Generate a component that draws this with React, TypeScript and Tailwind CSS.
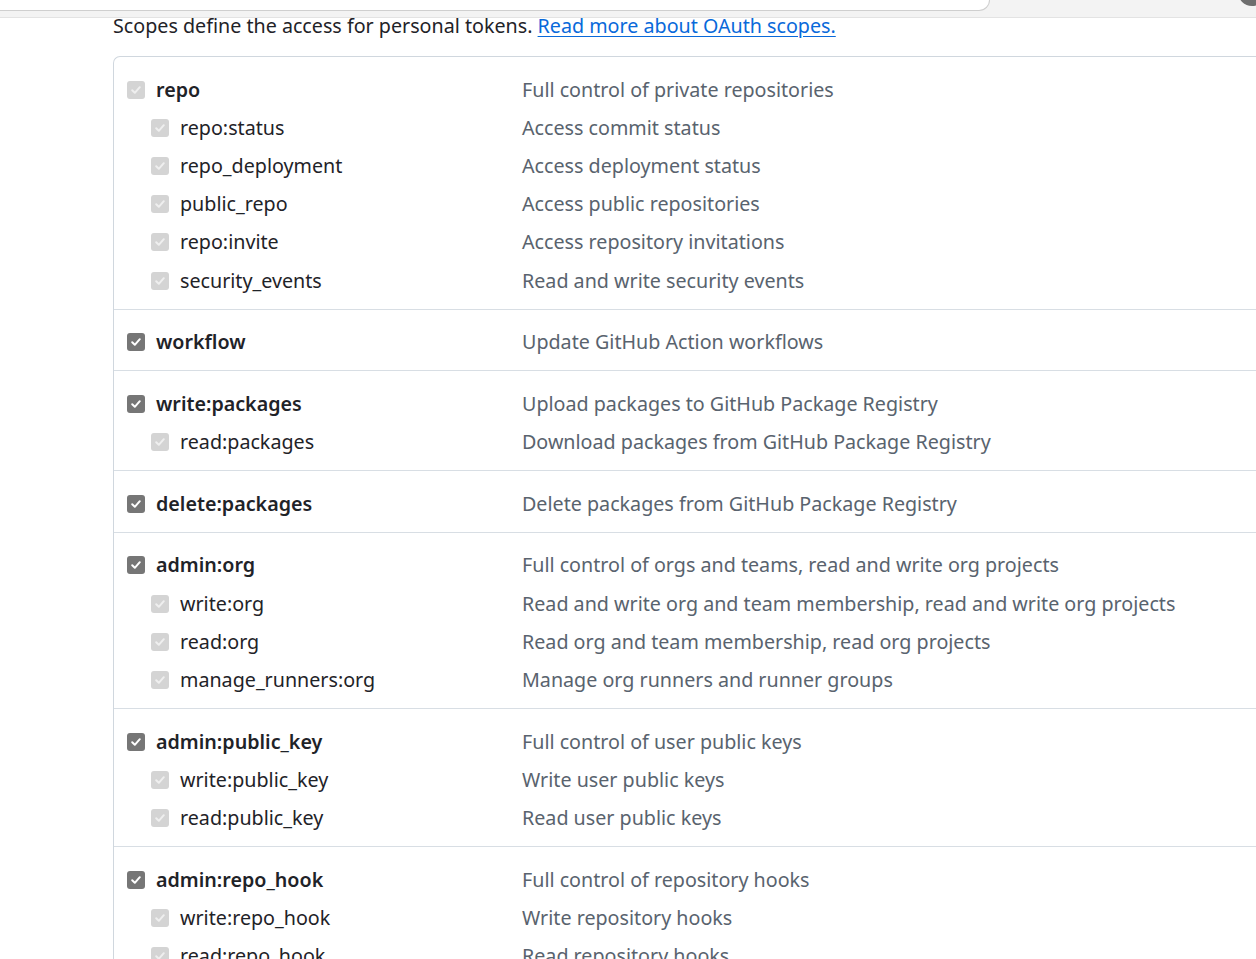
import React from "react";

type Scope = { name: string; desc: string; sub?: boolean; active?: boolean };

const groups: Scope[][] = [
  [
    { name: "repo", desc: "Full control of private repositories" },
    { name: "repo:status", desc: "Access commit status", sub: true },
    { name: "repo_deployment", desc: "Access deployment status", sub: true },
    { name: "public_repo", desc: "Access public repositories", sub: true },
    { name: "repo:invite", desc: "Access repository invitations", sub: true },
    { name: "security_events", desc: "Read and write security events", sub: true },
  ],
  [{ name: "workflow", desc: "Update GitHub Action workflows", active: true }],
  [
    { name: "write:packages", desc: "Upload packages to GitHub Package Registry", active: true },
    { name: "read:packages", desc: "Download packages from GitHub Package Registry", sub: true },
  ],
  [{ name: "delete:packages", desc: "Delete packages from GitHub Package Registry", active: true }],
  [
    { name: "admin:org", desc: "Full control of orgs and teams, read and write org projects", active: true },
    { name: "write:org", desc: "Read and write org and team membership, read and write org projects", sub: true },
    { name: "read:org", desc: "Read org and team membership, read org projects", sub: true },
    { name: "manage_runners:org", desc: "Manage org runners and runner groups", sub: true },
  ],
  [
    { name: "admin:public_key", desc: "Full control of user public keys", active: true },
    { name: "write:public_key", desc: "Write user public keys", sub: true },
    { name: "read:public_key", desc: "Read user public keys", sub: true },
  ],
  [
    { name: "admin:repo_hook", desc: "Full control of repository hooks", active: true },
    { name: "write:repo_hook", desc: "Write repository hooks", sub: true },
    { name: "read:repo_hook", desc: "Read repository hooks", sub: true },
  ],
  [{ name: "admin:org_hook", desc: "Full control of organization hooks", active: true }],
];

function Checkbox({ active }: { active?: boolean }) {
  return (
    <span
      className={
        "flex h-[18px] w-[18px] shrink-0 items-center justify-center rounded-[3px] " +
        (active ? "bg-[#767676]" : "bg-[#d4d4d4]")
      }
    >
      <svg width="12" height="12" viewBox="0 0 12 12" fill="none" aria-hidden="true">
        <path
          d="M2.2 6.3L4.8 8.8L9.8 3.2"
          stroke={active ? "#ffffff" : "#efefef"}
          strokeWidth="2"
          strokeLinecap="round"
          strokeLinejoin="round"
        />
      </svg>
    </span>
  );
}

function Row({ scope }: { scope: Scope }) {
  return (
    <div className="flex h-[38.2px] items-center">
      <div
        className={
          "flex w-[408px] shrink-0 items-center gap-[11px] " + (scope.sub ? "pl-[37px]" : "pl-[13px]")
        }
      >
        <Checkbox active={scope.active} />
        <span className={scope.sub ? "text-[#1f2328]" : "font-semibold text-[#1f2328]"}>{scope.name}</span>
      </div>
      <span className="whitespace-nowrap text-[#59636e]">{scope.desc}</span>
    </div>
  );
}

export default function App() {
  return (
    <div
      className="min-h-screen overflow-hidden bg-white text-[19.7px] leading-[30px]"
      style={{ fontFamily: '"Noto Sans", "Open Sans", Arial, sans-serif' }}
    >
      {/* top strip */}
      <div className="relative h-[18px] border-b border-[#e3e3e3] bg-[#f3f3f3]">
        <div className="h-[11px] w-[990px] rounded-br-[16px] border-b border-r border-[#cfcfcf] bg-white" />
        <div className="absolute right-[-10px] top-[-22px] h-[28px] w-[28px] rounded-full bg-[#6e6e6e]" />
      </div>

      <div className="pl-[113px]">
        <p className="mt-[-7px] whitespace-nowrap text-[#1f2328]">
          Scopes define the access for personal tokens.{" "}
          <a href="#" className="text-[#0969da] underline underline-offset-[3px]">
            Read more about OAuth scopes.
          </a>
        </p>

        <div className="mt-[15px] w-[1300px] rounded-tl-[7px] border-l border-t border-[#d0d7de]">
          {groups.map((g, i) => (
            <div key={i} className={"pt-[13.5px] pb-[9px] " + (i > 0 ? "border-t border-[#d8dee4]" : "")}>
              {g.map((s) => (
                <Row key={s.name} scope={s} />
              ))}
            </div>
          ))}
        </div>
      </div>
    </div>
  );
}
